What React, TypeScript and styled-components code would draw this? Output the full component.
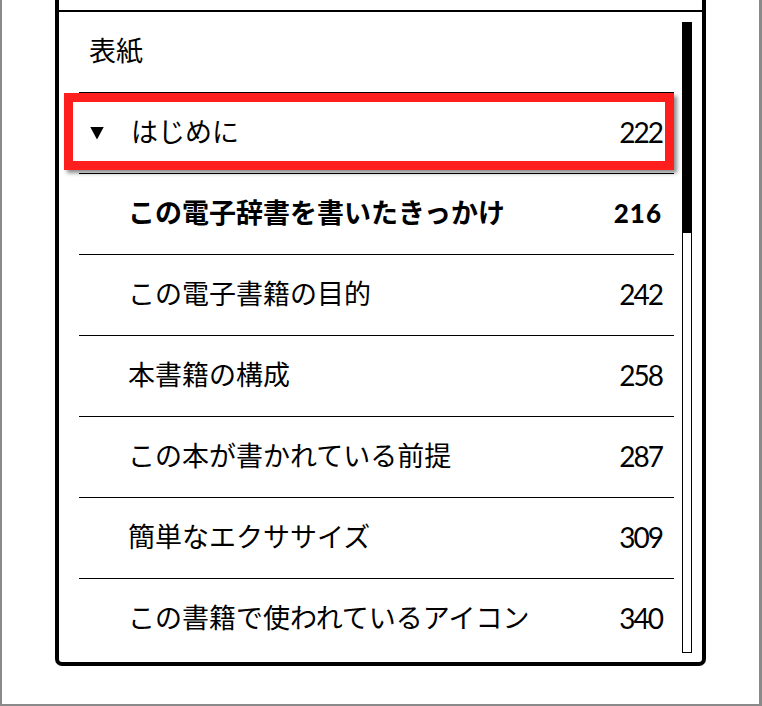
import React from "react";
import styled, { createGlobalStyle } from "styled-components";

const GlobalStyle = createGlobalStyle`
  html, body { margin: 0; padding: 0; background: #ffffff; }
  body { font-family: "Noto Sans CJK JP", "Noto Sans", sans-serif; color: #000; }
  * { box-sizing: border-box; }
`;

const Page = styled.div`
  width: 762px;
  height: 706px;
  background: #ffffff;
  border-left: 2px solid #8a8a8a;
  border-right: 3px solid #8a8a8a;
  border-bottom: 2px solid #8a8a8a;
  overflow: hidden;
`;

const Panel = styled.div`
  margin-left: 53px;
  width: 651px;
  height: 666px;
  border: 4px solid #000;
  border-top: none;
  border-radius: 0 0 7px 7px;
  display: flex;
  flex-direction: column;
  overflow: hidden;
`;

const Header = styled.div`
  height: 12px;
  flex: none;
  border-bottom: 2px solid #000;
`;

const Body = styled.div`
  flex: 1;
  display: flex;
  gap: 8px;
  padding: 0 10px 0 20px;
  min-height: 0;
`;

const List = styled.ul`
  list-style: none;
  margin: 0;
  padding: 0;
  flex: 1;
  min-width: 0;
`;

const Row = styled.li<{ $last?: boolean }>`
  position: relative;
  height: 81px;
  display: flex;
  align-items: center;
  padding-right: 12px;
  border-bottom: ${(p) => (p.$last ? "none" : "1px solid #000")};
`;

const Caret = styled.span`
  width: 14px;
  height: 13px;
  background: #000;
  clip-path: polygon(0 0, 100% 0, 50% 100%);
  margin-left: 11px;
  margin-right: 27px;
  flex: none;
`;

const Title = styled.span<{ $indent: number; $bold?: boolean }>`
  flex: 1;
  padding-left: ${(p) => p.$indent}px;
  margin-bottom: 6px;
  font-family: "Noto Sans CJK JP", sans-serif;
  font-size: 27px;
  font-weight: ${(p) => (p.$bold ? 700 : 400)};
  line-height: 1;
  white-space: nowrap;
`;

const PageNum = styled.span<{ $bold?: boolean }>`
  margin-bottom: 3px;
  font-family: Lato, "Open Sans", sans-serif;
  font-size: ${(p) => (p.$bold ? 26 : 28)}px;
  font-weight: ${(p) => (p.$bold ? 900 : 400)};
  letter-spacing: ${(p) => (p.$bold ? 1 : -2)}px;
  line-height: 1;
`;

const Highlight = styled.div`
  position: absolute;
  left: -15px;
  top: 0;
  right: 0;
  height: 77px;
  border: 9px solid #ff1e1e;
  box-shadow: 3px 3px 4px rgba(0, 0, 0, 0.45);
  pointer-events: none;
`;

const ScrollTrack = styled.div`
  width: 10px;
  flex: none;
  margin: 10px 0 9px;
  border: 1px solid #000;
  background: #fff;
  display: flex;
  flex-direction: column;
`;

const ScrollThumb = styled.div`
  background: #000;
  flex: none;
`;

type Entry = { title: string; page: string; bold?: boolean };

const entries: Entry[] = [
  { title: "この電子辞書を書いたきっかけ", page: "216", bold: true },
  { title: "この電子書籍の目的", page: "242" },
  { title: "本書籍の構成", page: "258" },
  { title: "この本が書かれている前提", page: "287" },
  { title: "簡単なエクササイズ", page: "309" },
  { title: "この書籍で使われているアイコン", page: "340" },
];

export default function App() {
  return (
    <Page>
      <GlobalStyle />
      <Panel>
        <Header />
        <Body>
          <List>
            <Row>
              <Title $indent={10}>表紙</Title>
            </Row>
            <Row>
              <Caret />
              <Title $indent={0}>はじめに</Title>
              <PageNum>222</PageNum>
              <Highlight />
            </Row>
            {entries.map((e, i) => (
              <Row key={e.title} $last={i === entries.length - 1}>
                <Title $indent={49} $bold={e.bold}>
                  {e.title}
                </Title>
                <PageNum $bold={e.bold}>{e.page}</PageNum>
              </Row>
            ))}
          </List>
          <ScrollTrack>
            <ScrollThumb style={{ height: 210 }} />
          </ScrollTrack>
        </Body>
      </Panel>
    </Page>
  );
}
